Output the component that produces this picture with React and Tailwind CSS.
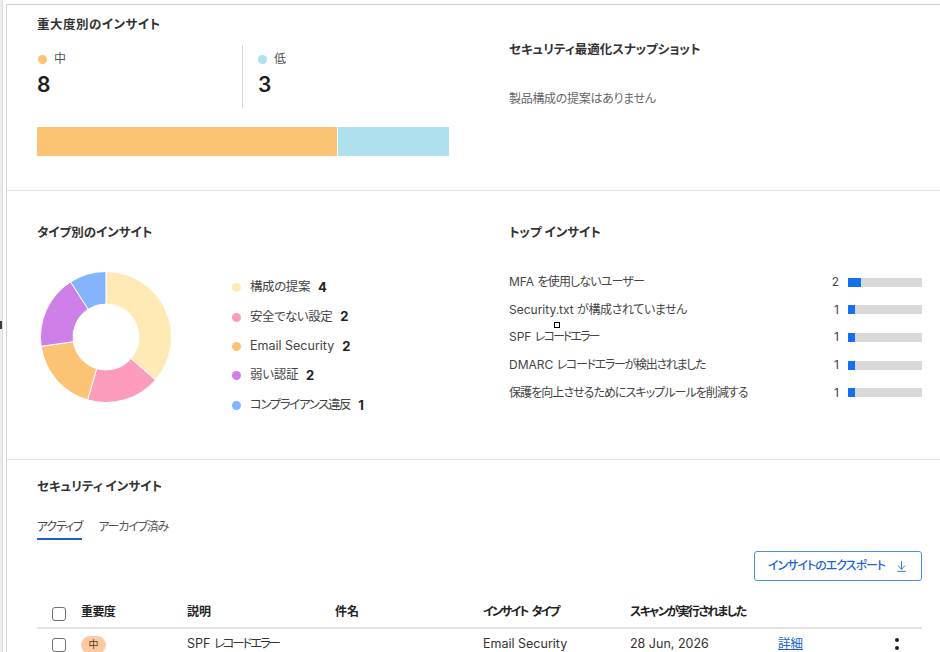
import { ArrowDownToLine } from "lucide-react";

const types = [
    { label: "構成の提案", count: 4, color: "#ffe9b5", track: "tracking-[-0.4px]" },
    { label: "安全でない設定", count: 2, color: "#fc9bbb", track: "tracking-[-0.5px]" },
    { label: "Email Security", count: 2, color: "#fdc374", track: "" },
    { label: "弱い認証", count: 2, color: "#cf7fe8", track: "tracking-[-0.3px]" },
    { label: "コンプライアンス違反", count: 1, color: "#84b4fd", track: "tracking-[-1.4px]" },
];

const topInsights = [
    { pre: "MFA ", label: "を使用しないユーザー", count: 2, track: "tracking-[-0.85px]" },
    { pre: "Security.txt ", label: "が構成されていません", count: 1, track: "tracking-[-0.4px]" },
    { pre: "SPF ", label: "レコードエラー", count: 1, track: "tracking-[-1.9px]" },
    { pre: "DMARC ", label: "レコードエラーが検出されました", count: 1, track: "tracking-[-1.3px]" },
    { pre: "", label: "保護を向上させるためにスキップルールを削減する", count: 1, track: "tracking-[-0.95px]" },
];

// donut slice, angles in radians measured clockwise from 12 o'clock
const slice = (cx, cy, R, r, a0, a1) => {
    const p = (rad, a) => [cx + rad * Math.sin(a), cy - rad * Math.cos(a)];
    const large = a1 - a0 > Math.PI ? 1 : 0;
    const [x0, y0] = p(R, a0);
    const [x1, y1] = p(R, a1);
    const [x2, y2] = p(r, a1);
    const [x3, y3] = p(r, a0);
    return `M${x0} ${y0} A${R} ${R} 0 ${large} 1 ${x1} ${y1} L${x2} ${y2} A${r} ${r} 0 ${large} 0 ${x3} ${y3} Z`;
};

function Donut() {
    const total = types.reduce((s, t) => s + t.count, 0);
    let acc = 0;
    return (
        <svg width="132" height="132" viewBox="0 0 132 132">
            {types.map((t) => {
                const a0 = (acc / total) * Math.PI * 2;
                acc += t.count;
                const a1 = (acc / total) * Math.PI * 2;
                return (
                    <path
                        key={t.label}
                        d={slice(66, 66, 65.5, 33, a0, a1)}
                        fill={t.color}
                        stroke="#fff"
                        strokeWidth="1"
                    />
                );
            })}
        </svg>
    );
}

const Checkbox = () => (
    <div className="w-[14px] h-[14px] border-[1.5px] border-[#707070] rounded-[3px] bg-white"></div>
);

export default function App() {
    return (
        <div className="flex min-h-screen bg-white text-[#333] font-[Inter,'Noto_Sans_CJK_JP',sans-serif] [font-feature-settings:'palt']">
            <div className="w-[2px] bg-[#ececec] flex flex-col">
                <div className="mt-[321px] h-[8px] bg-[#3a3a3a]"></div>
            </div>
            <div className="w-[1px] bg-[#dcdcdc]"></div>
            <div className="w-[3px]"></div>

            <div className="flex-1 mt-[4px] border-l border-t border-[#d2d2d2] relative">
                {/* Severity + snapshot */}
                <div className="h-[186px] border-b border-[#e2e2e2] grid grid-cols-[472px_1fr] pl-[30px] pr-[18px]">
                    <div className="pt-[11px]">
                        <h3 className="text-[12.5px] leading-[18px] font-bold text-[#333] tracking-[0.5px]">
                            重大度別のインサイト
                        </h3>
                        <div className="flex mt-[11px] h-[63px]">
                            <div className="w-[205px] pt-[6px]">
                                <div className="flex items-center gap-[7px] h-[16px]">
                                    <span className="w-[9px] h-[9px] rounded-full bg-[#fdc374] ml-[1px]"></span>
                                    <span className="text-[12px] text-[#555]">中</span>
                                </div>
                                <p className="text-[21px] leading-[26px] font-semibold text-[#1e1e1e] mt-[5px]">8</p>
                            </div>
                            <div className="border-l border-[#d8d8d8] pl-[15px] pt-[6px]">
                                <div className="flex items-center gap-[7px] h-[16px]">
                                    <span className="w-[9px] h-[9px] rounded-full bg-[#aee0ee]"></span>
                                    <span className="text-[12px] text-[#555]">低</span>
                                </div>
                                <p className="text-[21px] leading-[26px] font-semibold text-[#1e1e1e] mt-[5px]">3</p>
                            </div>
                        </div>
                        <div className="flex mt-[19px] h-[29px] w-[412px]">
                            <div className="w-[300px] bg-[#fdc374]"></div>
                            <div className="w-[1px] bg-white"></div>
                            <div className="flex-1 bg-[#aee0ee]"></div>
                        </div>
                    </div>
                    <div className="pt-[36px]">
                        <h3 className="text-[12.5px] leading-[18px] font-bold text-[#333]">
                            セキュリティ最適化スナップショット
                        </h3>
                        <p className="mt-[31px] text-[12px] leading-[18px] text-[#666] tracking-[-0.3px]">
                            製品構成の提案はありません
                        </p>
                    </div>
                </div>

                {/* Type + top insights */}
                <div className="h-[269px] border-b border-[#e2e2e2] grid grid-cols-[472px_1fr] pl-[30px] pr-[18px]">
                    <div className="pt-[33px]">
                        <h3 className="text-[12.5px] leading-[18px] font-bold text-[#333]">
                            タイプ別のインサイト
                        </h3>
                        <div className="flex items-start mt-[29px] ml-[3px]">
                            <Donut />
                            <div className="ml-[60px] mt-[2px]">
                                {types.map((t) => (
                                    <div key={t.label} className="flex items-center h-[29.4px]">
                                        <span
                                            className="w-[9px] h-[9px] rounded-full mr-[9px]"
                                            style={{ backgroundColor: t.color }}
                                        ></span>
                                        <span className={`text-[12.5px] text-[#444] ${t.track}`}>{t.label}</span>
                                        <span className="ml-[8px] text-[13px] font-bold text-[#222]">{t.count}</span>
                                    </div>
                                ))}
                            </div>
                        </div>
                    </div>
                    <div className="pt-[33px]">
                        <h3 className="text-[12.5px] leading-[18px] font-bold text-[#333]">
                            トップ インサイト
                        </h3>
                        <div className="mt-[26.5px]">
                            {topInsights.map((t) => (
                                <div key={t.label} className="flex items-center h-[27.6px]">
                                    <span className="flex-1 text-[12px] text-[#444] whitespace-pre">
                                        {t.pre}
                                        <span className={t.track}>{t.label}</span>
                                    </span>
                                    <span className="text-[12px] text-[#444]">{t.count}</span>
                                    <div className="ml-[9px] w-[74px] h-[9px] bg-[#d9d9d9]">
                                        <div
                                            className="h-full bg-[#1570ef]"
                                            style={{ width: `${(t.count / 11) * 74}px` }}
                                        ></div>
                                    </div>
                                </div>
                            ))}
                        </div>
                    </div>
                </div>

                {/* Security insights table */}
                <div className="pl-[30px] pr-[18px] pt-[18px]">
                    <h3 className="text-[12.5px] leading-[18px] font-bold text-[#333]">
                        セキュリティ インサイト
                    </h3>
                    <div className="flex gap-[16px] mt-[22px] text-[12px] leading-[18px] tracking-[-1.2px]">
                        <div className="pb-[2px] border-b-2 border-[#1a5fd0] text-[#444]">アクティブ</div>
                        <div className="pb-[2px] text-[#555]">アーカイブ済み</div>
                    </div>
                    <div className="flex justify-end mt-[11px]">
                        <button className="h-[30px] w-[168px] border border-[#4b8ef0] rounded-[3px] flex items-center justify-center gap-[10px] text-[12px] font-medium text-[#1d63d6] tracking-[-1px]">
                            インサイトのエクスポート
                            <ArrowDownToLine size={13} strokeWidth={1.6} />
                        </button>
                    </div>

                    <div className="mt-[16.5px] grid grid-cols-[44px_106px_148px_148px_147px_148px_117px_1fr] h-[31px] border-b-2 border-[#e2e2e2] items-center text-[12px] font-bold text-[#222]">
                        <div className="pl-[15px] pt-[4px]"><Checkbox /></div>
                        <div className="tracking-[-0.6px]">重要度</div>
                        <div>説明</div>
                        <div>件名</div>
                        <div className="flex gap-[4px] tracking-[-1.9px]">
                            <span>インサイト</span>
                            <span>タイプ</span>
                        </div>
                        <div className="tracking-[-1.6px]">スキャンが実行されました</div>
                        <div></div>
                        <div></div>
                    </div>
                    <div className="grid grid-cols-[44px_106px_148px_148px_147px_148px_117px_1fr] h-[32px] items-center text-[12.5px] text-[#333]">
                        <div className="pl-[15px]"><Checkbox /></div>
                        <div>
                            <span className="inline-flex items-center justify-center w-[25px] h-[18px] rounded-full bg-[#fdc9a2] text-[10px] text-[#5b3a1c]">
                                中
                            </span>
                        </div>
                        <div className="whitespace-pre">
                            SPF <span className="tracking-[-2.2px]">レコードエラー</span>
                        </div>
                        <div></div>
                        <div>Email Security</div>
                        <div>28 Jun, 2026</div>
                        <div className="text-[#1a5fd0] underline">詳細</div>
                        <div className="flex flex-col gap-[3.5px] pt-[6px]">
                            <span className="w-[4px] h-[4px] rounded-full bg-[#1e1e1e]"></span>
                            <span className="w-[4px] h-[4px] rounded-full bg-[#1e1e1e]"></span>
                            <span className="w-[4px] h-[4px] rounded-full bg-[#1e1e1e]"></span>
                        </div>
                    </div>
                </div>

                {/* mouse cursor marker */}
                <div className="absolute left-[547px] top-[317px] w-[6px] h-[6px] border border-black bg-white"></div>
            </div>
        </div>
    );
}
